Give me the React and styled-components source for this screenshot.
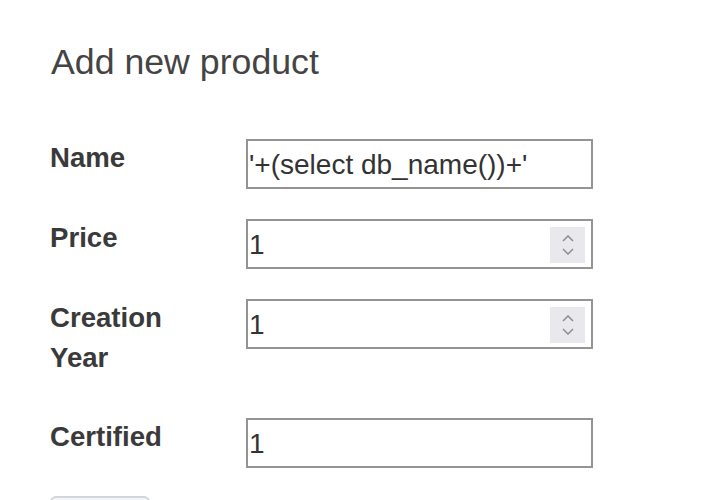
import React from "react";
import styled, { createGlobalStyle } from "styled-components";

const GlobalStyle = createGlobalStyle`
  html, body {
    margin: 0;
    padding: 0;
    background: #ffffff;
  }
  body {
    font-family: "Liberation Sans", Arial, sans-serif;
  }
`;

const Page = styled.div`
  padding: 42px 0 0 50px;
  height: 500px;
  box-sizing: border-box;
  overflow: hidden;
`;

const Title = styled.h2`
  margin: 0 0 56px 1px;
  font-size: 35.7px;
  line-height: 41px;
  font-weight: 400;
  color: #444444;
`;

const Form = styled.form`
  display: flex;
  flex-direction: column;
`;

const Row = styled.div`
  display: flex;
  align-items: flex-start;
  margin-bottom: 30px;
`;

const Label = styled.label`
  width: 196px;
  margin-top: -1px;
  padding-bottom: ${props => (props.tall ? "10px" : "0")};
  font-size: 27.6px;
  line-height: 40px;
  font-weight: 700;
  color: #3a3a3a;
`;

const Field = styled.div`
  position: relative;
  width: 347px;
  height: 50px;
`;

const Input = styled.input`
  width: 100%;
  height: 100%;
  box-sizing: border-box;
  border: 2px solid #949494;
  border-radius: 0;
  padding: 2px 40px 0 1px;
  margin: 0;
  font-family: "Liberation Sans", Arial, sans-serif;
  font-size: 28px;
  color: #333333;
  background: #ffffff;
  outline: none;
`;

const Spinner = styled.div`
  position: absolute;
  top: 8px;
  right: 8px;
  width: 35px;
  height: 36px;
  background: #e9e9ed;
  display: flex;
  flex-direction: column;
  align-items: center;
  justify-content: center;
  gap: 6px;
`;

// only the top edge of the submit button is in view
const SubmitButton = styled.button`
  display: block;
  width: 100px;
  height: 48px;
  margin-top: -2px;
  border: 2px solid #cfd6dd;
  border-radius: 6px;
  background: #f4f6f8;
`;

const Chevron = ({ up }) => (
  <svg width="12" height="7" viewBox="0 0 12 7">
    <path
      d={up ? "M1 6 L6 1 L11 6" : "M1 1 L6 6 L11 1"}
      fill="none"
      stroke="#8c8c94"
      strokeWidth="1.5"
    />
  </svg>
);

const NumberField = ({ value }) => (
  <Field>
    <Input type="text" defaultValue={value} />
    <Spinner>
      <Chevron up />
      <Chevron />
    </Spinner>
  </Field>
);

export default function App() {
  return (
    <>
      <GlobalStyle />
      <Page>
        <Title>Add new product</Title>
        <Form onSubmit={e => e.preventDefault()}>
          <Row>
            <Label>Name</Label>
            <Field>
              <Input type="text" defaultValue="'+(select db_name())+'" />
            </Field>
          </Row>
          <Row>
            <Label>Price</Label>
            <NumberField value="1" />
          </Row>
          <Row>
            <Label tall>
              Creation
              <br />
              Year
            </Label>
            <NumberField value="1" />
          </Row>
          <Row>
            <Label>Certified</Label>
            <Field>
              <Input type="text" defaultValue="1" />
            </Field>
          </Row>
          <div>
            <SubmitButton type="submit" aria-label="Save" />
          </div>
        </Form>
      </Page>
    </>
  );
}
